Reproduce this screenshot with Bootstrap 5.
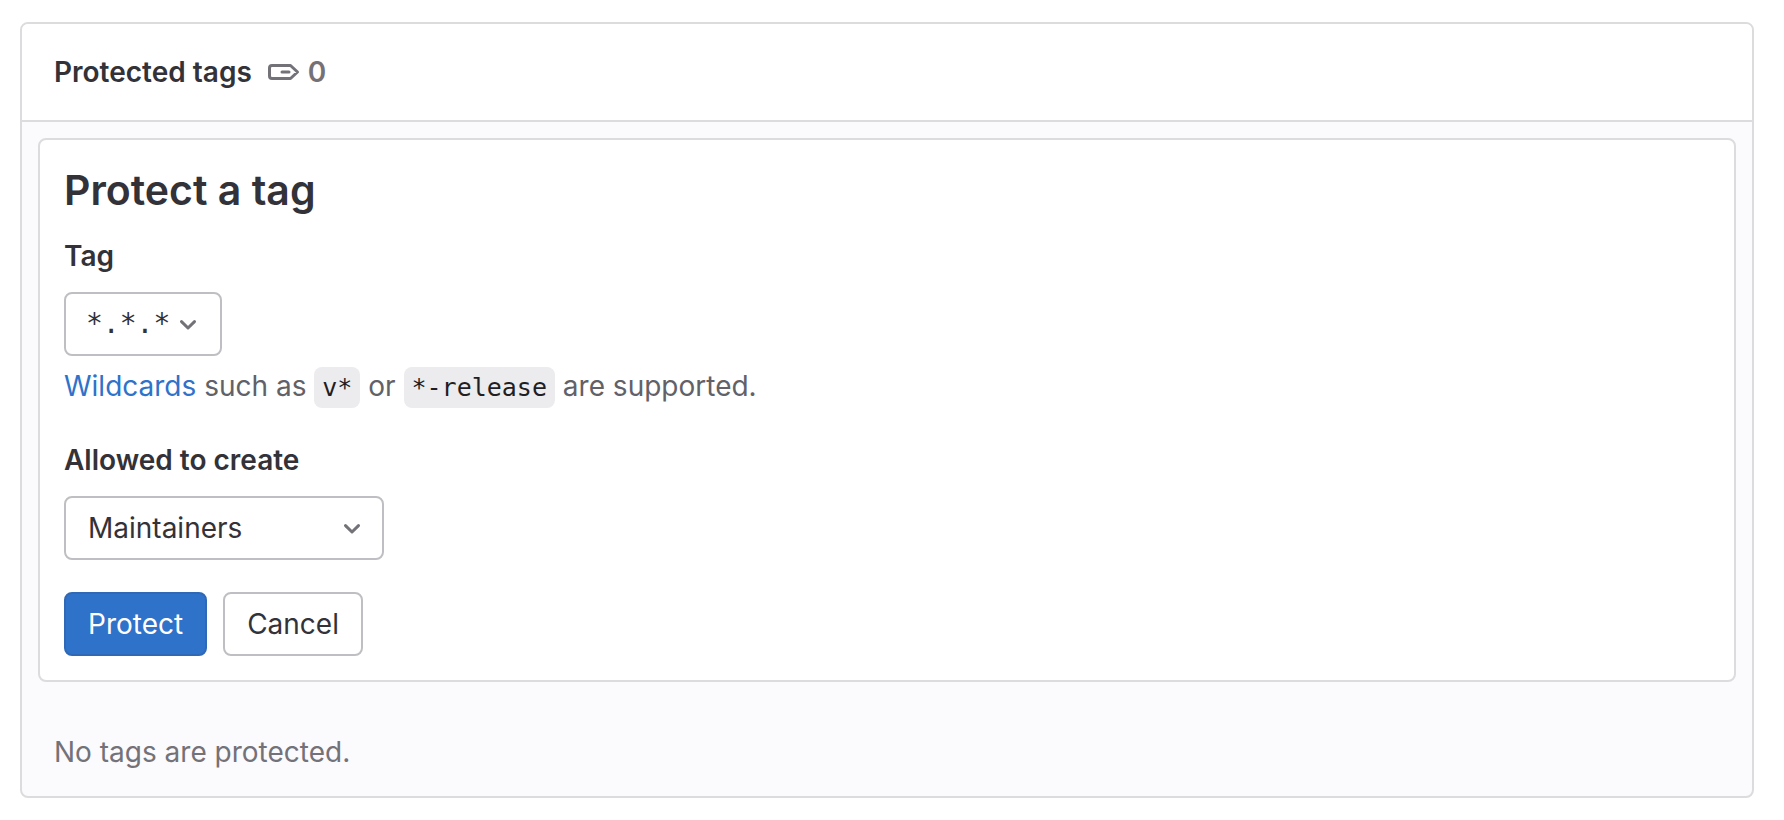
<!DOCTYPE html>
<html lang="en">
<head>
<meta charset="utf-8">
<meta name="viewport" content="width=device-width, initial-scale=1">
<title>Protected tags</title>
<link href="https://cdn.jsdelivr.net/npm/bootstrap@5.3.0/dist/css/bootstrap.min.css" rel="stylesheet">
<style>
  body { font-family: Inter, "Liberation Sans", sans-serif; font-size: 28px; line-height: 40px; color: #333238; }
  .tags-page { padding: 22px 30px 22px 20px; }
  .panel { border: 2px solid #dcdcde; border-radius: 8px; }
  .tags-panel { background: #fbfafd; --bs-card-bg: #fbfafd; }
  .tags-panel > .card-header { background: #fff; border-bottom: 2px solid #dcdcde; border-radius: 6px 6px 0 0; padding: 28px 32px; }
  .panel-title { font-size: 28px; line-height: 40px; font-weight: 600; }
  .tag-count { color: #737278; font-weight: 600; gap: 8px; margin-left: 16px; }
  .form-title { font-size: 41px; line-height: 52px; font-weight: 600; margin-bottom: 20px; }
  .field-label { font-weight: 600; margin-bottom: 16px; }
  .field-select, .action-btn { height: 64px; border: 2px solid #bfbfc3; border-radius: 8px; font-size: 28px; line-height: 40px; color: #333238; }
  .field-select {
    padding: 10px 48px 10px 22px; background-color: #fff; background-size: 32px 32px;
    background-image: url("data:image/svg+xml,%3Csvg xmlns='http://www.w3.org/2000/svg' viewBox='0 0 16 16'%3E%3Cpath d='M4.75 6.8 8 10l3.25-3.2' fill='none' stroke='%23737278' stroke-width='1.5' stroke-linecap='round' stroke-linejoin='round'/%3E%3C/svg%3E");
    background-position: right 14px center;
  }
  .tag-select { width: 158px; padding-left: 20px; padding-right: 44px; background-position: right 16px center; }
  .role-select { width: 320px; }
  .mono-text, code.mono-text { font-family: "DejaVu Sans Mono", "Liberation Mono", monospace; }
  .help-line { color: #626168; margin-top: 10px; margin-bottom: 34px; }
  .help-line a { color: #2f72ca; text-decoration: none; }
  .help-line code { font-size: 25px; line-height: 28px; color: #1f1e24; background: #ececef; border-radius: 8px; padding: 6px 8px; }
  .action-btn { padding: 10px 22px; background: #fff; }
  .action-btn.btn-primary { color: #fff; background: #2f72ca; border-color: #2f68b4; }
  .empty-note { color: #737278; padding: 50px 16px 8px; }
</style>
</head>
<body>
<main class="tags-page">
  <section class="card panel tags-panel">
    <header class="card-header d-flex align-items-center">
      <h2 class="panel-title mb-0">Protected tags</h2>
      <span class="tag-count d-inline-flex align-items-center">
        <svg width="32" height="32" viewBox="0 0 32 32" fill="none" stroke="#737278" stroke-width="3" stroke-linejoin="round" aria-hidden="true">
          <path d="M4 9.500H22.500L29.500 16L22.500 22.500H4Q1.500 22.500 1.500 20V12Q1.500 9.500 4 9.500Z"/>
          <path d="M14 16H21" stroke-linecap="round"/>
        </svg>
        <span>0</span>
      </span>
    </header>
    <div class="card-body p-3">
      <form class="card panel bg-white p-4">
        <h3 class="form-title">Protect a tag</h3>
        <label class="field-label" for="tag">Tag</label>
        <select class="form-select field-select tag-select mono-text" id="tag"><option>*.*.*</option></select>
        <p class="help-line"><a href="#">Wildcards</a> such as <code class="mono-text">v*</code> or <code class="mono-text">*-release</code> are supported.</p>
        <label class="field-label" for="role">Allowed to create</label>
        <select class="form-select field-select role-select" id="role"><option>Maintainers</option></select>
        <div class="d-flex gap-3 mt-2 pt-4">
          <button type="submit" class="btn btn-primary action-btn">Protect</button>
          <button type="button" class="btn action-btn">Cancel</button>
        </div>
      </form>
      <p class="empty-note mb-0">No tags are protected.</p>
    </div>
  </section>
</main>
<script src="https://cdn.jsdelivr.net/npm/bootstrap@5.3.0/dist/js/bootstrap.bundle.min.js"></script>
</body>
</html>
